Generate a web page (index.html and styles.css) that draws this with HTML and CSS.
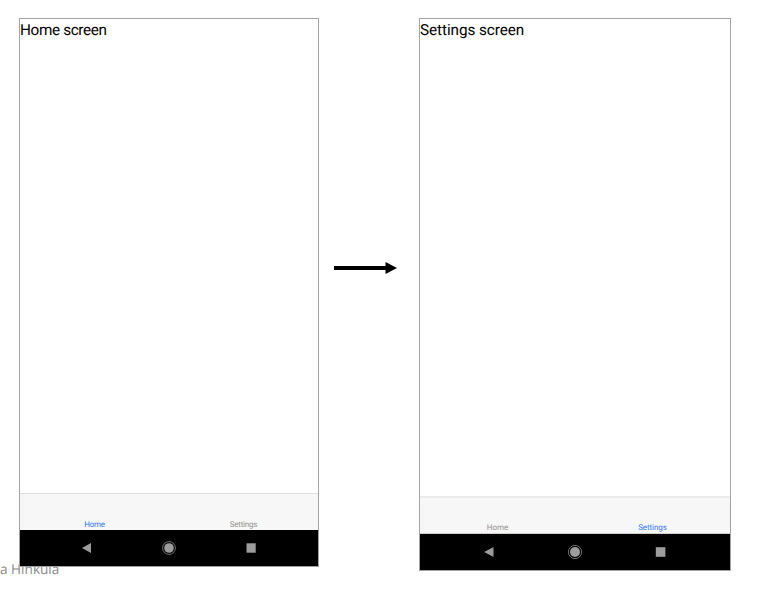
FILE: index.html
```html
<!DOCTYPE html>
<html lang="en">
<head>
<meta charset="utf-8">
<title>Tab navigation</title>
<link rel="stylesheet" href="styles.css">
</head>
<body>
<div class="caption">a Hinkula</div>
<main class="slide">
  <section class="phone phone-home">
    <div class="screen">Home screen</div>
    <nav class="tabs"><span class="tab active">Home</span><span class="tab">Settings</span></nav>
    <div class="system">
      <svg class="icon" viewBox="0 0 16 16"><path d="M3 8 12 3v10z"/></svg>
      <svg class="icon" viewBox="0 0 16 16"><circle cx="8" cy="8" r="4.8"/><circle class="ring" cx="8" cy="8" r="6.4"/></svg>
      <svg class="icon" viewBox="0 0 16 16"><path d="M3.5 3.3h9.2v9.4H3.5z"/></svg>
    </div>
  </section>
  <svg class="arrow" viewBox="0 0 63 12"><path d="M0 4h51.5V0L63 6 51.5 12V8H0z"/></svg>
  <section class="phone phone-settings">
    <div class="screen">Settings screen</div>
    <nav class="tabs"><span class="tab">Home</span><span class="tab active">Settings</span></nav>
    <div class="system">
      <svg class="icon" viewBox="0 0 16 16"><path d="M3.2 8 12.5 3v10z"/></svg>
      <svg class="icon" viewBox="0 0 16 16"><circle cx="8" cy="8" r="5"/><circle class="ring" cx="8" cy="8" r="6.6"/></svg>
      <svg class="icon" viewBox="0 0 16 16"><path d="M2.8 3.2h9.6v9.6H2.8z"/></svg>
    </div>
  </section>
</main>
</body>
</html>
```
FILE: styles.css
```css
* { box-sizing: border-box; }
body {
  margin: 0;
  height: 593px;
  overflow: hidden;
  background: #fff;
  font-family: Roboto, sans-serif;
  text-rendering: geometricPrecision;
}
.slide {
  position: relative;
  display: flex;
  align-items: flex-start;
  padding: 18px 0 0 19px;
}
.phone {
  display: flex;
  flex-direction: column;
  flex: none;
  border: 1px solid #a3a3a3;
  background: #fff;
}
.phone-home { width: 300px; height: 549px; }
.phone-settings { width: 312px; height: 553px; }
.screen {
  flex: 1;
  padding-top: 2px;
  font-size: 15.3px;
  line-height: 18px;
  letter-spacing: -.36px;
  color: #000;
}
.phone-settings .screen { letter-spacing: -.07px; }
.tabs {
  display: flex;
  align-items: flex-end;
  height: 37px;
  border-top: 1px solid #dedede;
  background: #f7f7f7;
}
.phone-settings .tabs {
  height: 38px;
  border-top: 2px solid #ebebeb;
  border-bottom: 1px solid #cfcfcf;
}
.tab {
  flex: 1;
  text-align: center;
  font-size: 8px;
  line-height: 11px;
  letter-spacing: -.22px;
  color: #929292;
}
.phone-settings .tab { line-height: 10px; letter-spacing: -.06px; }
.tab.active { color: #3478f6; }
.system {
  display: flex;
  justify-content: center;
  align-items: center;
  gap: 66px;
  height: 36px;
  background: #000;
}
.phone-settings .system { gap: 70px; }
.icon { width: 16px; height: 16px; fill: #9c9c9c; }
.ring { fill: none; stroke: #8c8c8c; stroke-width: .8; }
.arrow { flex: none; width: 63px; height: 12px; margin: 244px 22px 0 15px; }
.caption {
  position: absolute;
  left: 0;
  top: 559px;
  font: 13.6px/20px "Open Sans", sans-serif;
  color: #8b8b8b;
}
```
